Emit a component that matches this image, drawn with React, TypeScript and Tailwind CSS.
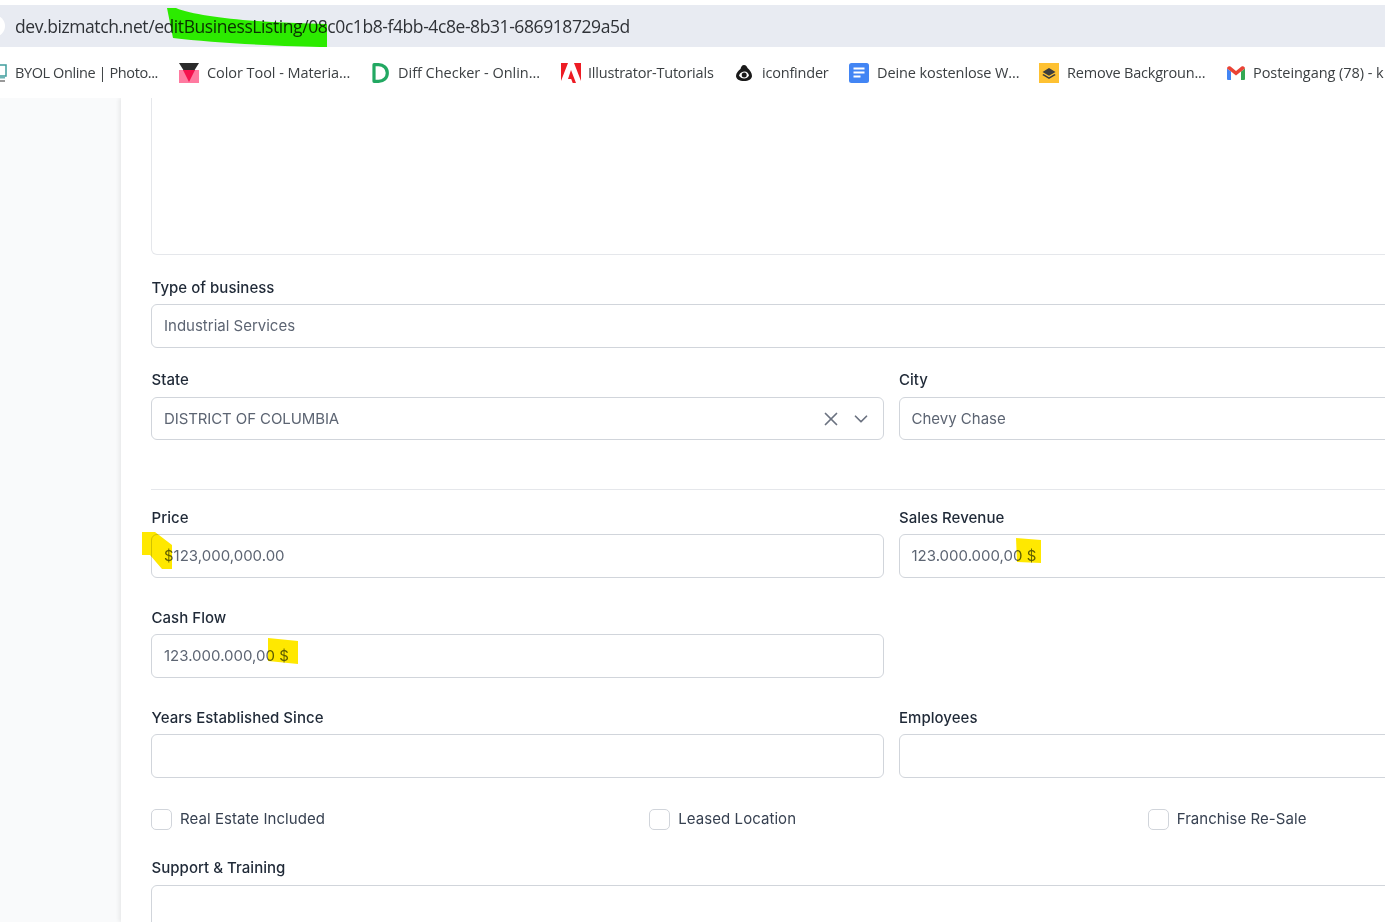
import React from 'react';
import { X, ChevronDown } from 'lucide-react';

const formFont = "font-['Inter',sans-serif]";
const labelClass = 'block text-[15px] leading-[20px] font-medium text-[#1f2937] mb-[6px] ml-[0.5px] tracking-[0.03px]';
const inputClass = 'flex items-center h-[44px] px-[12px] bg-white border border-[#d1d5db] rounded-[6px] text-[15px] text-[#5d6573]';

const ByolIcon = () => (
  <svg width="13" height="20" viewBox="0 0 13 20">
    <rect x="1" y="2" width="11" height="11" fill="#fff" stroke="#3f9d9d" strokeWidth="1.500" />
    <rect x="2" y="14" width="9" height="1.500" fill="#6fb5b5" />
    <rect x="2" y="17" width="9" height="2" fill="#999" />
  </svg>
);

const ColorToolIcon = () => (
  <svg width="20" height="20" viewBox="0 0 20 20">
    <rect y="7" width="20" height="13" fill="#ff7aa0" />
    <path d="M0 0h20l-5 8H5z" fill="#2a2a2a" />
    <path d="M4 7h12l-6 12z" fill="#f5124d" />
  </svg>
);

const DiffIcon = () => (
  <svg width="17" height="20" viewBox="0 0 17 20">
    <path d="M2 1.700h4.500c5 0 8.800 3.300 8.800 8.300s-3.800 8.300-8.800 8.300H2z" fill="none" stroke="#22a862" strokeWidth="3.200" strokeLinejoin="round" />
  </svg>
);

const AdobeIcon = () => (
  <svg width="20" height="20" viewBox="0 0 20 20">
    <path d="M0 0h7L0 18zM13 0h7v18zM10 7l5 13h-3.300l-1.500-4H7z" fill="#ed1c24" />
  </svg>
);

const FinderIcon = () => (
  <svg width="18" height="18" viewBox="0 0 18 18">
    <path d="M9 1c2 0 3 1.500 3.500 3C15 6 17 9 17 12c0 3-3.500 5-8 5s-8-2-8-5c0-3 2.500-5.500 4.500-7C6 3 7 1 9 1z" fill="#1a1a1a" />
    <path d="M4 11.500C5 8.500 7.500 7.500 9.500 7.500c2.500 0 4 1.800 4.500 4-1 2-2.800 3-4.800 3-2.200 0-4.200-1.200-5.200-3z" fill="#fff" />
    <circle cx="9.200" cy="11" r="2.500" fill="#1a1a1a" />
  </svg>
);

const DocsIcon = () => (
  <svg width="20" height="20" viewBox="0 0 20 20">
    <rect width="20" height="20" rx="2.500" fill="#4285f4" />
    <path d="M4.500 4.500h11v2h-11zM4.500 8.500h11v2h-11zM4.500 12.500h7v2h-7z" fill="#fff" />
  </svg>
);

const RemoveBgIcon = () => (
  <svg width="20" height="20" viewBox="0 0 20 20">
    <rect width="20" height="20" fill="#fec132" />
    <path d="M10 5l6.500 4-6.500 3.800L3.500 9z" fill="#3d3d3d" />
    <path d="M4.500 11L10 14.200l5.500-3.200 1.200 1L10 16l-6.700-4z" fill="#3d3d3d" />
  </svg>
);

const GmailIcon = () => (
  <svg width="18" height="14" viewBox="0 0 18 14">
    <path d="M0 2.500V13a1 1 0 0 0 1 1h3V5.500z" fill="#4285f4" />
    <path d="M18 2.500V13a1 1 0 0 1-1 1h-3V5.500z" fill="#34a853" />
    <path d="M0 2.500C0 .5 2 -.5 3.500.6L9 5 14.500.6C16 -.5 18 .5 18 2.500L14 5.500 9 9.500 4 5.500z" fill="#ea4335" />
  </svg>
);

const Bookmark = ({ icon, label, className, textClass }: { icon: React.ReactNode; label: string; className: string; textClass: string }) => (
  <div className={`flex items-center shrink-0 ${className}`}>
    {icon}
    <span className={`whitespace-nowrap ${textClass}`}>{label}</span>
  </div>
);

const Field = ({ label, value, className = '' }: { label: string; value?: string; className?: string }) => (
  <div className={className}>
    <label className={labelClass}>{label}</label>
    <div className={inputClass}>{value}</div>
  </div>
);

const Check = ({ label }: { label: string }) => (
  <div className="flex items-center">
    <span className="w-[21px] h-[21px] bg-white border border-[#d1d5db] rounded-[5px] mr-[8px]" />
    <span className="text-[15px] text-[#374151] tracking-[0.06px]">{label}</span>
  </div>
);

export default function App() {
  return (
    <div className="relative w-[1385px] h-[922px] overflow-hidden bg-white">
      {/* browser chrome */}
      <div className="h-[98px] pt-[5px] bg-white font-['Open_Sans',sans-serif]">
        <div className="relative flex items-center h-[42px] pl-[15px] bg-[#e8ebf2] text-[17.5px] text-[#2f3237] tracking-[-0.42px] whitespace-nowrap">
          <span className="absolute -left-[17px] top-[10px] w-[22px] h-[22px] rounded-full bg-white" />
          dev.bizmatch.net/editBusinessListing/08c0c1b8-f4bb-4c8e-8b31-686918729a5d
        </div>
        <div className="flex items-center h-[51px] -ml-[6px] text-[14.5px] text-[#3c4043]">
          <Bookmark className="w-[185px] gap-[8px]" textClass="tracking-[-0.4px]" label="BYOL Online | Photo..." icon={<ByolIcon />} />
          <Bookmark className="w-[193px] gap-[8px]" textClass="tracking-[-0.06px]" label="Color Tool - Materia..." icon={<ColorToolIcon />} />
          <Bookmark className="w-[189px] gap-[9px]" textClass="tracking-[-0.02px]" label="Diff Checker - Onlin..." icon={<DiffIcon />} />
          <Bookmark className="w-[174px] gap-[7px]" textClass="tracking-[-0.2px]" label="Illustrator-Tutorials" icon={<AdobeIcon />} />
          <Bookmark className="w-[114px] gap-[9px]" textClass="tracking-[-0.2px]" label="iconfinder" icon={<FinderIcon />} />
          <Bookmark className="w-[190px] gap-[8px]" textClass="tracking-[-0.1px]" label="Deine kostenlose W..." icon={<DocsIcon />} />
          <Bookmark className="w-[188px] gap-[8px]" textClass="tracking-[-0.2px]" label="Remove Backgroun..." icon={<RemoveBgIcon />} />
          <Bookmark className="gap-[8px]" textClass="tracking-[-0.05px]" label="Posteingang (78) - k" icon={<GmailIcon />} />
        </div>
      </div>

      {/* page */}
      <div className={`flex h-[824px] overflow-hidden bg-[#f9fafb] ${formFont}`}>
        <div className="w-[121px] shrink-0" />
        <div className="w-[1600px] shrink-0 bg-white pl-[30px] shadow-[-2px_0_4px_rgba(0,0,0,0.07)]">
          <div className="w-[1495px]">
            <div className="h-[157px] bg-white border border-t-0 border-[#e5e7eb] rounded-b-[6px]" />

            <Field className="mt-[23px]" label="Type of business" value="Industrial Services" />

            <div className="grid grid-cols-[733px_733px] gap-x-[14.5px] mt-[22px]">
              <div>
                <label className={`${labelClass} !mb-[7px]`}>State</label>
                <div className={`${inputClass} justify-between !h-[43px] !pr-[11px]`}>
                  <span className="pt-[1px] tracking-[-0.1px]">DISTRICT OF COLUMBIA</span>
                  <span className="flex items-center gap-[8px] text-[#6b7280]">
                    <X size={22} strokeWidth={1.9} />
                    <ChevronDown size={22} strokeWidth={1.9} />
                  </span>
                </div>
              </div>
              <div>
                <label className={`${labelClass} !mb-[7px]`}>City</label>
                <div className={`${inputClass} !h-[43px]`}>
                  <span className="pt-[1px]">Chevy Chase</span>
                </div>
              </div>
            </div>

            <div className="h-px bg-[#e5e7eb] mt-[49px]" />

            <div className="grid grid-cols-[733px_733px] gap-x-[14.5px] gap-y-[30px] mt-[18px]">
              <Field label="Price" value="$123,000,000.00" />
              <Field label="Sales Revenue" value="123.000.000,00 $" />
              <Field label="Cash Flow" value="123.000.000,00 $" />
              <div />
              <Field label="Years Established Since" />
              <Field label="Employees" />
            </div>

            <div className="grid grid-cols-3 mt-[30px]">
              <Check label="Real Estate Included" />
              <Check label="Leased Location" />
              <Check label="Franchise Re-Sale" />
            </div>

            <label className={`${labelClass} mt-[27px] !mb-[7px]`}>Support &amp; Training</label>
            <div className="h-[80px] bg-white border border-[#d1d5db] rounded-[6px]" />
          </div>
        </div>
      </div>

      {/* marker scribbles drawn over the screenshot */}
      <svg className="absolute inset-0 mix-blend-multiply pointer-events-none" width="1385" height="922" viewBox="0 0 1385 922">
        <path d="M167 8l9 0C200 18 265 23 327 24V47C290 47 215 43 173 38z" fill="#30ff00" />
        <path d="M142 532h13l17 13v24h-10l-12-14h-8z" fill="#ffe800" />
        <path d="M1016 538l25 2v23l-24-1z" fill="#ffe800" />
        <path d="M268 638l30 3v23l-30-3z" fill="#ffe800" />
      </svg>
    </div>
  );
}
